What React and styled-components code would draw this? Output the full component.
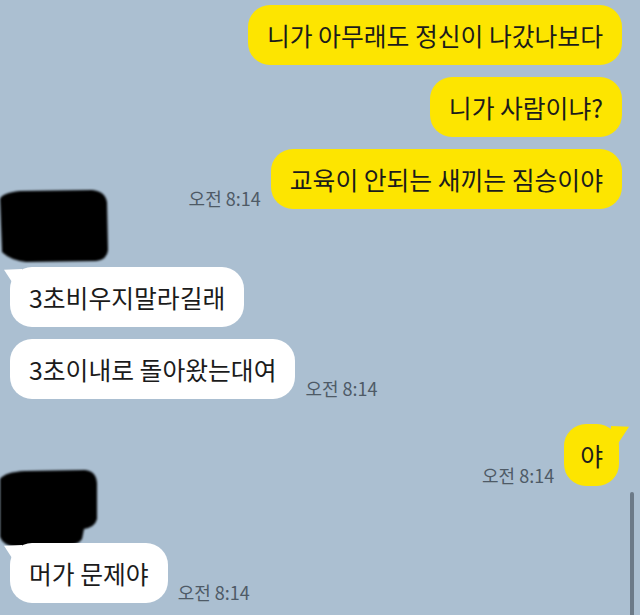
import React from 'react'
import styled, { createGlobalStyle, css } from 'styled-components'

const GlobalStyle = createGlobalStyle`
  html, body {
    margin: 0;
    padding: 0;
    background: #abbfd1;
  }
  body {
    font-family: "Noto Sans CJK KR", "Noto Sans", sans-serif;
  }
`

const Screen = styled.div`
  width: 640px;
  height: 615px;
  overflow: hidden;
  position: relative;
  background: #abbfd1;
`

const Feed = styled.div`
  display: flex;
  flex-flow: column nowrap;
  gap: 12px;
  padding: 5px 18px 0 10px;
`

const Row = styled.div`
  display: flex;
  flex-flow: row nowrap;
  align-items: flex-end;
  justify-content: ${p => (p.$mine ? 'flex-end' : 'flex-start')};
  gap: 10px;
  margin-top: ${p => (p.$spaced ? '13px' : '0')};
`

const Bubble = styled.div`
  position: relative;
  padding: ${p => (p.$short ? '16px 16px' : '15px 19px')};
  min-height: 30px;
  line-height: 30px;
  font-size: 24.8px;
  color: #1b1b1b;
  white-space: nowrap;
  border-radius: 22px;
  background: ${p => (p.$mine ? '#fde500' : '#ffffff')};
  margin-right: ${p => (p.$mine && p.$tail ? '3px' : '0')};

  ${p => p.$tail && css`
    &::before {
      content: '';
      position: absolute;
      top: 2px;
      width: 18px;
      height: 20px;
      background: inherit;
      ${p.$mine
        ? css`
            right: -10px;
            clip-path: polygon(0 0, 100% 4%, 30% 100%, 0 100%);
          `
        : css`
            left: -6px;
            clip-path: polygon(0 4%, 100% 0, 100% 100%, 70% 100%);
          `}
    }
  `}
`

const Time = styled.span`
  font-size: 18px;
  line-height: 20px;
  padding-bottom: 1px;
  color: #4e5a66;
  white-space: nowrap;
`

const NameLine = styled.div`
  position: relative;
  height: ${p => p.$h}px;
`

const Scribble = styled.svg`
  position: absolute;
  left: -10px;
  top: ${p => p.$top}px;
  overflow: visible;
`

const ScrollThumb = styled.div`
  position: absolute;
  right: 6px;
  top: 492px;
  bottom: -4px;
  width: 4px;
  border-radius: 2px;
  background: #6c7a88;
`

function Redaction({ top, w, h, d, height }) {
  return (
    <NameLine $h={height}>
      <Scribble $top={top} width={w} height={h} viewBox={`0 0 ${w} ${h}`}>
        <defs>
          <filter id="soft" x="-10%" y="-10%" width="120%" height="120%">
            <feGaussianBlur stdDeviation="1.2" />
          </filter>
        </defs>
        <path d={d} fill="#050505" filter="url(#soft)" />
      </Scribble>
    </NameLine>
  )
}

function Mine({ text, time, tail, short, spaced }) {
  return (
    <Row $mine $spaced={spaced}>
      {time && <Time>{time}</Time>}
      <Bubble $mine $tail={tail} $short={short}>{text}</Bubble>
    </Row>
  )
}

function Theirs({ text, time, tail }) {
  return (
    <Row>
      <Bubble $tail={tail}>{text}</Bubble>
      {time && <Time>{time}</Time>}
    </Row>
  )
}

export default function App() {
  return (
    <Screen>
      <GlobalStyle />
      <Feed>
        <Mine text="니가 아무래도 정신이 나갔나보다" />
        <Mine text="니가 사람이냐?" />
        <Mine text="교육이 안되는 새끼는 짐승이야" time="오전 8:14" />

        <Redaction
          height={34}
          top={-31}
          w={110}
          h={74}
          d="M0,9 Q2,3 20,1 L92,0 Q105,1 107,12 L108,60 Q107,70 96,71 L26,72 Q10,70 2,62 Z"
        />
        <Theirs text="3초비우지말라길래" tail />
        <Theirs text="3초이내로 돌아왔는대여" time="오전 8:14" />

        <Mine text="야" time="오전 8:14" tail short spaced />

        <Redaction
          height={33}
          top={-29}
          w={100}
          h={80}
          d="M0,10 Q5,3 25,2 L85,1 Q96,2 97,14 L97,50 Q95,58 84,60 L82,70 Q78,76 68,76 L15,78 Q3,76 0,68 Z"
        />
        <Theirs text="머가 문제야" time="오전 8:14" tail />
      </Feed>
      <ScrollThumb />
    </Screen>
  )
}
